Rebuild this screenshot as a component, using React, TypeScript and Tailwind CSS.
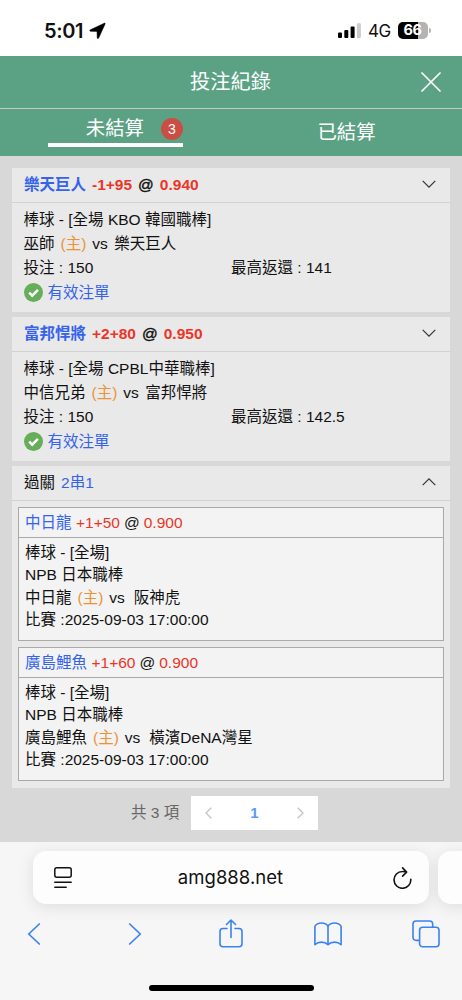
import type { ReactNode } from "react";

type Bet = {
  team: string;
  handicap: string;
  odds: string;
  league: string;
  home: string;
  away: string;
  stake: string;
  payout: string;
};

type ParlayLeg = {
  team: string;
  handicap: string;
  odds: string;
  home: string;
  away: string;
  time: string;
};

const bets: Bet[] = [
  {
    team: "樂天巨人",
    handicap: "-1+95",
    odds: "0.940",
    league: "棒球 - [全場 KBO 韓國職棒]",
    home: "巫師",
    away: "樂天巨人",
    stake: "150",
    payout: "141",
  },
  {
    team: "富邦悍將",
    handicap: "+2+80",
    odds: "0.950",
    league: "棒球 - [全場 CPBL中華職棒]",
    home: "中信兄弟",
    away: "富邦悍將",
    stake: "150",
    payout: "142.5",
  },
];

const legs: ParlayLeg[] = [
  {
    team: "中日龍",
    handicap: "+1+50",
    odds: "0.900",
    home: "中日龍",
    away: "阪神虎",
    time: "2025-09-03 17:00:00",
  },
  {
    team: "廣島鯉魚",
    handicap: "+1+60",
    odds: "0.900",
    home: "廣島鯉魚",
    away: "橫濱DeNA灣星",
    time: "2025-09-03 17:00:00",
  },
];

function StatusBar() {
  return (
    <div className="flex h-14 items-start bg-white pt-[19px] font-['Inter','Liberation_Sans',sans-serif]">
      <span className="ml-[44px] w-[41px] text-[20px] leading-6 font-semibold tracking-[-0.4px] whitespace-nowrap">
        5:01
      </span>
      <svg className="mt-[3px] ml-[4px]" width="17" height="17" viewBox="0 0 17 17">
        <path
          d="M15.300 1.200 1.300 7.800c-.9.500-.7 1.500.3 1.500l6.400.1.200 6.300c0 1 1 1.200 1.500.3L16.100 2c.3-.6-.2-1.100-.8-.8Z"
          fill="#000"
          stroke="#000"
          strokeWidth=".5"
        />
      </svg>
      <svg className="mt-[3px] ml-[232px]" width="24" height="17" viewBox="0 0 24 17">
        <rect x="0" y="10.500" width="4" height="5.500" rx="1" />
        <rect x="6.300" y="8" width="4" height="8" rx="1" />
        <rect x="12.600" y="4.500" width="4" height="11.500" rx="1" />
        <rect x="18.900" y="1.200" width="4" height="14.800" rx="1" fill="#ccc" />
      </svg>
      <span className="ml-[6px] w-[24px] text-[17px] leading-6 tracking-[-0.6px]">4G</span>
      <div className="mt-[3px] ml-[6px] flex items-center">
        <div className="flex h-[17px] w-[30px] items-center justify-center rounded-[5px] bg-[linear-gradient(90deg,#000_66%,#b3b3b3_66%)] pr-px text-[14.500px] leading-none font-bold tracking-[-0.3px] text-white">
          66
        </div>
        <div className="ml-px h-[5px] w-[2px] rounded-r-full bg-[#b3b3b3]" />
      </div>
    </div>
  );
}

function Chevron({ up = false }: { up?: boolean }) {
  return (
    <svg width="14" height="8" viewBox="0 0 14 8" fill="none" stroke="#333" strokeWidth="1.200">
      <path d={up ? "M.7 7.200 7 .9l6.300 6.300" : "M.7.800 7 7.100 13.300.800"} />
    </svg>
  );
}

function CheckBadge() {
  return (
    <svg width="19" height="19" viewBox="0 0 19 19">
      <circle cx="9.500" cy="9.500" r="9.500" fill="#67ae5b" />
      <path d="m5.200 9.700 3 3 5.700-5.800" fill="none" stroke="#fff" strokeWidth="2.500" />
    </svg>
  );
}

function CardHeader({ children, open = false }: { children: ReactNode; open?: boolean }) {
  return (
    <div className="flex h-[34.500px] items-center justify-between border-b-[1.500px] border-[#d2d2d2] pr-[14px] pl-3">
      <div className="whitespace-pre">{children}</div>
      <div className={open ? "pb-[1px]" : "pb-[2px]"}>
        <Chevron up={open} />
      </div>
    </div>
  );
}

function BetCard({ bet }: { bet: Bet }) {
  return (
    <div className="h-[143.500px] bg-[#e9e9e9]">
      <CardHeader>
        <span className="font-bold">
          <span className="text-[#3563ec]">{bet.team}</span>
          <span className="ml-[6px] text-[#eb3528]">{bet.handicap}</span>
          <span className="mx-[6px] font-normal [-webkit-text-stroke:0.4px_#111]">@</span>
          <span className="text-[#eb3528]">{bet.odds}</span>
        </span>
      </CardHeader>
      <div className="pt-[5px] pr-3 pl-[11.500px] leading-6">
        <div>{bet.league}</div>
        <div>
          {bet.home}
          <span className="mx-[6px] text-[#ee9236]">(主)</span>
          vs<span className="ml-[6.500px]">{bet.away}</span>
        </div>
        <div className="grid grid-cols-[207.500px_1fr]">
          <span>投注 : {bet.stake}</span>
          <span>最高返還 : {bet.payout}</span>
        </div>
        <div className="flex h-[26px] items-center gap-[5px] text-[#3563ec]">
          <CheckBadge />
          有效注單
        </div>
      </div>
    </div>
  );
}

function LegBox({ leg }: { leg: ParlayLeg }) {
  return (
    <div className="h-[134px] border border-[#a9a9a9] bg-[#f3f3f3]">
      <div className="h-[30px] border-b border-[#a9a9a9] pl-[6px] leading-[29px]">
        <span className="text-[#3563ec]">{leg.team}</span>
        <span className="ml-[4.500px] text-[#eb3528]">{leg.handicap}</span>
        <span className="mx-[4px]">@</span>
        <span className="text-[#eb3528]">{leg.odds}</span>
      </div>
      <div className="pt-[4px] pl-[6px] leading-[22.500px]">
        <div>棒球 - [全場]</div>
        <div>NPB 日本職棒</div>
        <div>
          {leg.home}
          <span className="mx-[6px] text-[#ee9236]">(主)</span>
          vs<span className="ml-[9px]">{leg.away}</span>
        </div>
        <div>比賽 :{leg.time}</div>
      </div>
    </div>
  );
}

function Pagination() {
  return (
    <div className="mt-2 flex h-[34px] items-center pl-[119px]">
      <span className="w-[60px] whitespace-nowrap text-[#666]">共 3 項</span>
      <div className="flex h-[34px] w-[127px] items-center justify-between bg-white px-[14px]">
        <svg width="7" height="12" viewBox="0 0 7 12" fill="none" stroke="#c0c4cc" strokeWidth="1.300">
          <path d="M6.300.700 1 6l5.300 5.300" />
        </svg>
        <span className="text-[15px] font-bold text-[#5b9bf8]">1</span>
        <svg width="7" height="12" viewBox="0 0 7 12" fill="none" stroke="#c0c4cc" strokeWidth="1.300">
          <path d="M.700.700 6 6 .700 11.300" />
        </svg>
      </div>
    </div>
  );
}

function BrowserBar() {
  return (
    <div className="flex h-[158px] flex-col overflow-hidden bg-[#f6f6f6] pt-[9px]">
      <div className="flex gap-[9px] pl-[33px]">
        <div className="flex h-[53px] w-[396px] shrink-0 items-center justify-between rounded-[13px] bg-[#fdfdfd] pr-[17px] pl-[21px] shadow-[0_3px_16px_rgba(0,0,0,0.1)]">
          <svg width="18" height="22" viewBox="0 0 18 22" fill="none" stroke="#111" strokeWidth="1.500" strokeLinecap="round">
            <rect x=".8" y=".8" width="16.400" height="9.400" rx="2" />
            <path d="M.8 15.200h16.400M.8 20.200h11.400" />
          </svg>
          <span className="mr-[4px] font-['Inter','Liberation_Sans',sans-serif] text-[18.500px] tracking-[0.03px]">
            amg888.net
          </span>
          <svg width="19" height="22" viewBox="0 0 19 22" fill="none" stroke="#111" strokeWidth="1.600" strokeLinecap="round" strokeLinejoin="round">
            <path d="M17.800 12.400A8.400 8.400 0 1 1 9.400 4.500q2-.1 4.100.500M9.600.900l4 4.200-4 4" />
          </svg>
        </div>
        <div className="h-[53px] w-[60px] shrink-0 rounded-[13px] bg-[#fdfdfd] shadow-[0_3px_16px_rgba(0,0,0,0.1)]" />
      </div>
      <div className="mt-[15px] flex h-[29px] items-center justify-between pr-[22px] pl-5 text-[#3a81f6]">
        <div className="flex w-7 justify-center">
          <svg width="14" height="22" viewBox="0 0 14 22" fill="none" stroke="currentColor" strokeWidth="1.700" strokeLinecap="round" strokeLinejoin="round">
            <path d="M12.300 1 1.700 11l10.600 10" />
          </svg>
        </div>
        <div className="flex w-7 justify-end pr-[4px]">
          <svg width="14" height="22" viewBox="0 0 14 22" fill="none" stroke="currentColor" strokeWidth="1.700" strokeLinecap="round" strokeLinejoin="round">
            <path d="m1.700 1 10.600 10L1.700 21" />
          </svg>
        </div>
        <div className="flex w-7 justify-end pr-px">
          <svg width="24" height="29" viewBox="0 0 24 29" fill="none" stroke="currentColor" strokeWidth="1.600" strokeLinecap="round" strokeLinejoin="round">
            <path d="M8 9.500H4A3 3 0 0 0 1 12.500v12.300a3 3 0 0 0 3 3h16a3 3 0 0 0 3-3V12.500a3 3 0 0 0-3-3h-4M12 18.500V1.200M7.500 5.500 12 1l4.500 4.500" />
          </svg>
        </div>
        <svg className="ml-px" width="28" height="24" viewBox="0 0 28 24" fill="none" stroke="currentColor" strokeWidth="1.600" strokeLinejoin="round">
          <path d="M14 4.300C11.500.1 3.600-.1.900 4.300v18.400c3.500-3.400 9.500-3.400 13.100 0 3.600-3.400 9.600-3.400 13.100 0V4.300C24.400-.1 16.500.1 14 4.300v18.400" />
        </svg>
        <svg width="28" height="28" viewBox="0 0 28 28" fill="none" stroke="currentColor" strokeWidth="1.600">
          <path d="M7.600 20.400H4a3 3 0 0 1-3-3V4a3 3 0 0 1 3-3h13.700a3 3 0 0 1 3 3v3.300" />
          <rect x="7.600" y="7.300" width="19.400" height="19.400" rx="3" />
        </svg>
      </div>
      <div className="mt-[37px] ml-[149px] h-[6px] w-[165px] shrink-0 rounded-full bg-black" />
    </div>
  );
}

export default function App() {
  return (
    <div className="h-[1000px] w-[462px] overflow-hidden bg-[#d8d8d8] font-['Liberation_Sans','Noto_Sans_CJK_TC',sans-serif] text-[15.500px] text-[#111]">
      <StatusBar />
      <header className="bg-[#5ba284] text-white">
        <div className="flex h-[53px] items-center border-b border-[#c8ccc9] pr-[21px] pl-[40px]">
          <h1 className="flex-1 text-center text-[20.200px]">投注紀錄</h1>
          <svg width="20" height="20" viewBox="0 0 20 20" stroke="#fff" strokeWidth="1.700" strokeLinecap="round">
            <path d="m1 1 18 18M19 1 1 19" />
          </svg>
        </div>
        <div className="grid h-[47px] grid-cols-2">
          <div className="ml-12 flex h-[38px] w-[135px] items-center justify-end border-b-[4px] border-white pt-[6px] text-[19.400px]">
            <span className="mr-[17px]">未結算</span>
            <span className="flex size-[22px] items-center justify-center rounded-full bg-[#cb4e44] text-[14px]">3</span>
          </div>
          <div className="flex items-center justify-center pt-px text-[19.400px]">已結算</div>
        </div>
      </header>
      <main className="h-[686px] px-3 pt-3">
        <div className="flex flex-col gap-[5.500px]">
          {bets.map((bet) => (
            <BetCard key={bet.team} bet={bet} />
          ))}
          <div className="h-[322px] bg-[#e9e9e9]">
            <CardHeader open>
              過關<span className="ml-[6px] text-[#3563ec]">2串1</span>
            </CardHeader>
            <div className="flex flex-col gap-[6px] px-[6px] pt-[6px]">
              {legs.map((leg) => (
                <LegBox key={leg.team} leg={leg} />
              ))}
            </div>
          </div>
        </div>
        <Pagination />
      </main>
      <BrowserBar />
    </div>
  );
}
